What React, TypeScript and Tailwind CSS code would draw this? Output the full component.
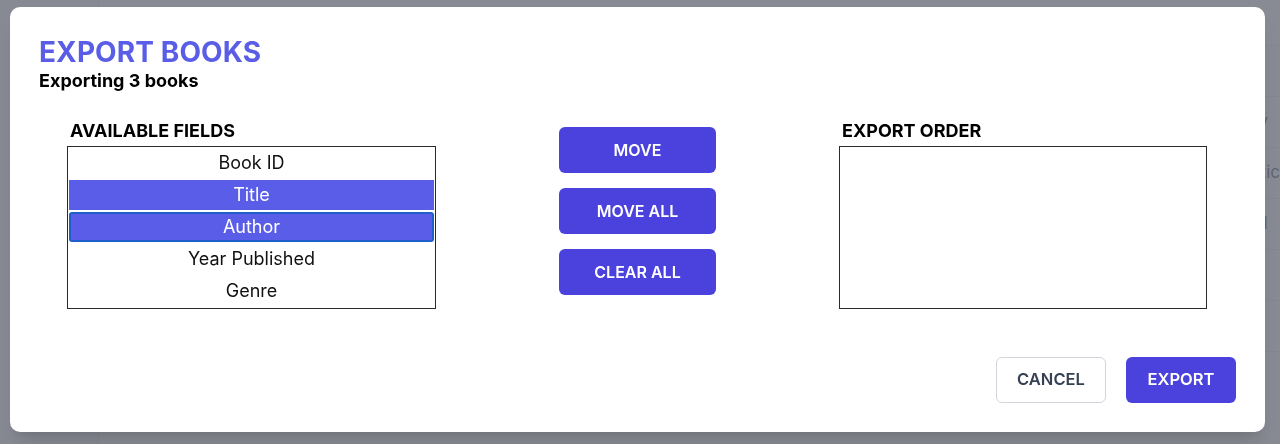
import React from "react";

const fields = ["Book ID", "Title", "Author", "Year Published", "Genre"];
const selected = ["Title", "Author"];

const rows = ["", "Fantasy", "Romantic", "Political", "", "", ""];

const App = () => {
    return (
        <div className="relative w-full h-[444px] overflow-hidden bg-white font-['Inter',sans-serif]">
            {/* page behind the dialog */}
            <div className="flex h-full">
                <aside className="w-[103px] border-r border-gray-200 bg-gray-50"></aside>
                <main className="flex-1 pt-[45px]">
                    {rows.map((g, i) => (
                        <div key={i} className="h-[51px] border-t border-gray-200 flex items-center pl-[1106px] text-gray-700 text-[17px] whitespace-nowrap">
                            {g}
                        </div>
                    ))}
                </main>
            </div>

            {/* overlay */}
            <div className="fixed inset-0 bg-[#6b6e79]/80 pt-[7px] pl-[10px] pr-[15px]">
                <div className="w-full bg-white rounded-[10px] shadow-xl px-[29px] pt-[28px] pb-[29px]">
                    {/* Header */}
                    <h1 className="text-[28px] leading-[35px] font-bold text-[#5a5de6] tracking-[0.1px]">EXPORT BOOKS</h1>
                    <p className="text-[18px] leading-[21.6px] font-bold text-black">Exporting 3 books</p>

                    {/* Field pickers */}
                    <div className="flex items-start gap-[123px] pl-[28px] mt-[27px]">
                        <div className="w-[369px]">
                            <div className="text-[18px] leading-[24px] font-bold text-black ml-[3px] mb-[3px]">AVAILABLE FIELDS</div>
                            <div className="h-[163px] border border-[#2a2a2a] bg-white">
                                {fields.map((f) => {
                                    const isSel = selected.includes(f);
                                    const isFocus = f === "Author";
                                    return (
                                        <div key={f} className="h-[32px] px-[1px] py-[1px]">
                                            <div
                                                className={
                                                    "h-[30px] flex items-center justify-center text-[18px] " +
                                                    (isSel ? "bg-[#5a5de8] text-white " : "text-[#111] ") +
                                                    (isFocus ? "border-2 border-[#1f5fc9] rounded-[3px]" : "")
                                                }
                                            >
                                                {f}
                                            </div>
                                        </div>
                                    );
                                })}
                            </div>
                        </div>

                        <div className="w-[157px] flex flex-col gap-[15px] mt-[8px]">
                            <button className="h-[46px] rounded-md bg-[#4b41dc] text-white text-base font-semibold">MOVE</button>
                            <button className="h-[46px] rounded-md bg-[#4b41dc] text-white text-base font-semibold">MOVE ALL</button>
                            <button className="h-[46px] rounded-md bg-[#4b41dc] text-white text-base font-semibold">CLEAR ALL</button>
                        </div>

                        <div className="w-[368px]">
                            <div className="text-[18px] leading-[24px] font-bold text-black ml-[3px] mb-[3px]">EXPORT ORDER</div>
                            <div className="h-[163px] border border-[#2a2a2a] bg-white"></div>
                        </div>
                    </div>

                    {/* Footer */}
                    <div className="flex justify-end gap-5 mt-[48px]">
                        <button className="h-[46px] w-[110px] rounded-md border border-gray-300 bg-white text-gray-700 text-[16.5px] font-semibold">CANCEL</button>
                        <button className="h-[46px] w-[110px] rounded-md bg-[#4b41dc] text-white text-[16.5px] font-semibold">EXPORT</button>
                    </div>
                </div>
            </div>
        </div>
    );
};

export default App;
